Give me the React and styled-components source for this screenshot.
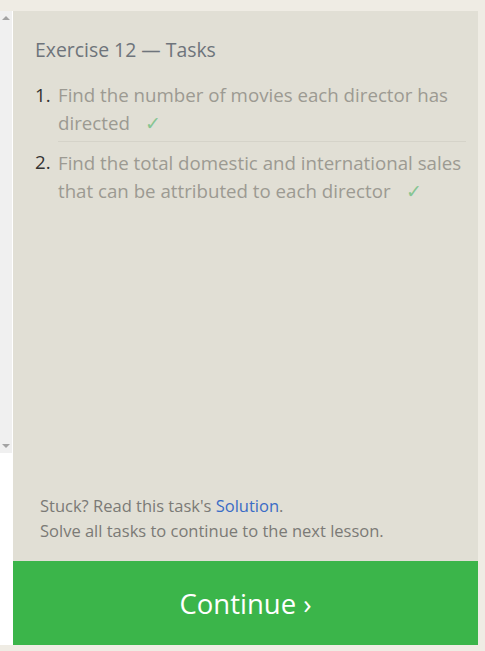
import React from "react";
import styled, { createGlobalStyle } from "styled-components";

const GlobalStyle = createGlobalStyle`
  html, body {
    margin: 0;
    padding: 0;
    background: #efece4;
    font-family: "Open Sans", "Noto Sans", sans-serif;
  }
`;

const Frame = styled.div`
  display: flex;
  height: 651px;
  box-sizing: border-box;
  padding: 11px 7px 6px 0;
`;

const Gutter = styled.div`
  width: 13px;
  display: flex;
  flex-direction: column;
  background: #ffffff;
`;

const Scrollbar = styled.div`
  height: 442px;
  width: 12px;
  background: #f0f0f0;
  display: flex;
  flex-direction: column;
  justify-content: space-between;
  align-items: center;
  padding: 5px 0;
  box-sizing: border-box;
`;

const Arrow = styled.div`
  width: 0;
  height: 0;
  border-left: 4px solid transparent;
  border-right: 4px solid transparent;
  ${(p) =>
    p.$down
      ? "border-top: 4px solid #a3a3a3;"
      : "border-bottom: 4px solid #a3a3a3;"}
`;

const Panel = styled.div`
  flex: 1;
  display: flex;
  flex-direction: column;
  background: #e1dfd5;
`;

const Content = styled.div`
  flex: 1;
  padding: 25px 12px 0 22px;
`;

const Heading = styled.h3`
  margin: 0 0 17px;
  font-size: 19.4px;
  font-weight: 400;
  line-height: 28px;
  color: #6e747b;
`;

const TaskList = styled.ol`
  margin: 0;
  padding: 0;
  list-style: none;
`;

const Task = styled.li`
  display: flex;
  font-size: 18.7px;
  line-height: 27.5px;
`;

const Num = styled.span`
  width: 23px;
  flex: none;
  padding-top: ${(p) => (p.$first ? "0" : "7px")};
  color: #333333;
`;

const TaskBody = styled.span`
  flex: 1;
  color: #9c9a92;
  padding: ${(p) => (p.$first ? "0 0 5px" : "7px 0 5px")};
  border-top: ${(p) => (p.$first ? "none" : "1px solid #d5d3c9")};
`;

const Check = styled.span`
  color: #86c592;
  margin-left: 15px;
`;

const Footer = styled.div`
  padding: 0 12px 18px 27px;
  font-size: 16.5px;
  line-height: 25px;
  color: #7b7a76;
`;

const Link = styled.a`
  color: #3a6cc6;
  text-decoration: none;
`;

const ContinueButton = styled.button`
  height: 84px;
  border: none;
  background: #3bb54a;
  color: #ffffff;
  font-family: inherit;
  font-size: 27.5px;
  cursor: pointer;
`;

const tasks = [
  "Find the number of movies each director has directed",
  "Find the total domestic and international sales that can be attributed to each director",
];

export default function App() {
  return (
    <>
      <GlobalStyle />
      <Frame>
        <Gutter>
          <Scrollbar>
            <Arrow />
            <Arrow $down />
          </Scrollbar>
        </Gutter>
        <Panel>
          <Content>
            <Heading>Exercise 12 — Tasks</Heading>
            <TaskList>
              {tasks.map((t, i) => (
                <Task key={i}>
                  <Num $first={i === 0}>{i + 1}.</Num>
                  <TaskBody $first={i === 0}>
                    {t}
                    <Check>✓</Check>
                  </TaskBody>
                </Task>
              ))}
            </TaskList>
          </Content>
          <Footer>
            Stuck? Read this task's <Link href="#">Solution</Link>.
            <br />
            Solve all tasks to continue to the next lesson.
          </Footer>
          <ContinueButton>Continue ›</ContinueButton>
        </Panel>
      </Frame>
    </>
  );
}
